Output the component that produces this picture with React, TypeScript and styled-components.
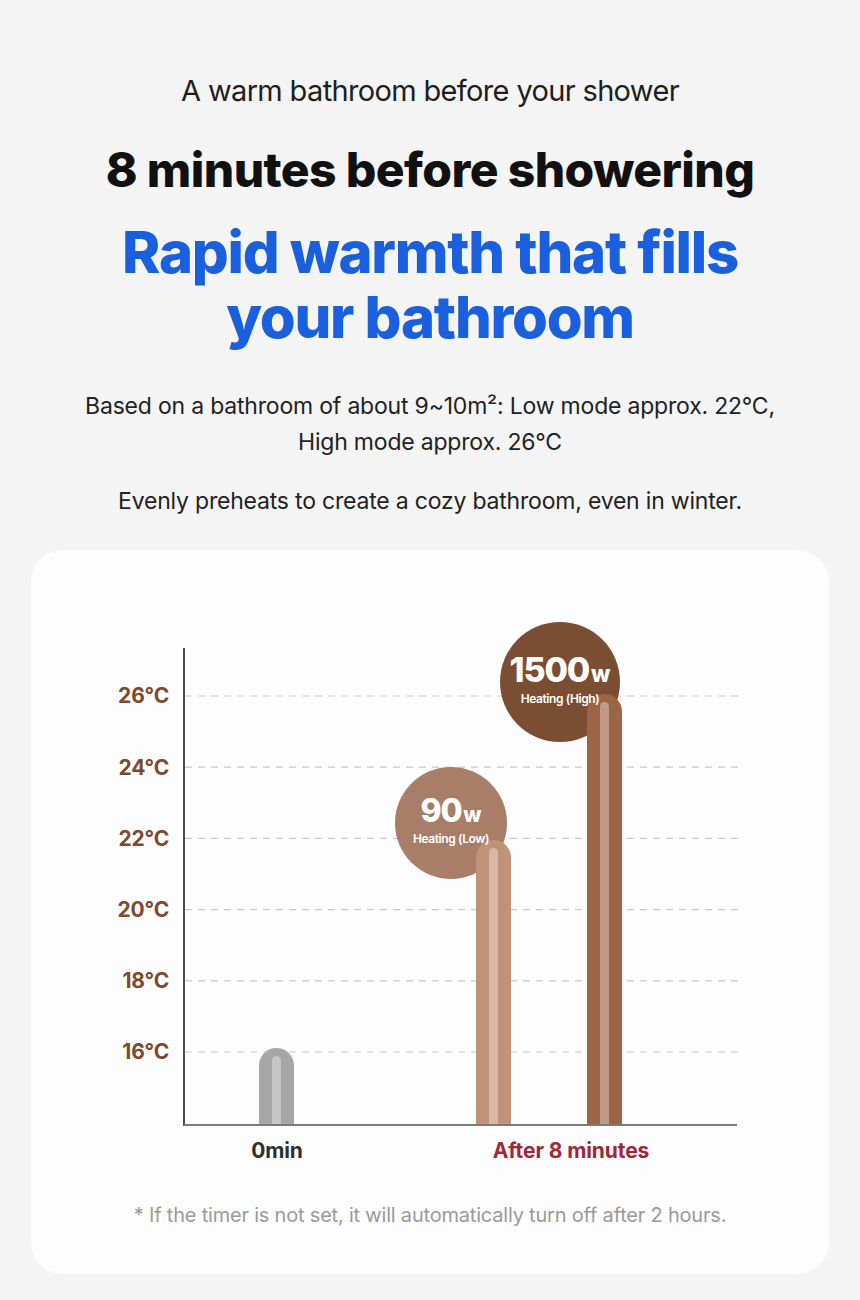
import React from "react";
import styled, { createGlobalStyle } from "styled-components";

const Global = createGlobalStyle`
  html, body { margin: 0; padding: 0; background: #f4f4f4; }
  body { font-family: Inter, "Noto Sans", "Liberation Sans", sans-serif; -webkit-font-smoothing: antialiased; }
  * { box-sizing: border-box; }
`;

const Page = styled.div`
  width: 860px;
  min-height: 1300px;
  padding: 70px 31px 26px;
  display: flex;
  flex-direction: column;
  align-items: center;
  background: #f4f4f4;
`;

const Eyebrow = styled.p`
  margin: 0;
  font-size: 29px;
  font-weight: 400;
  letter-spacing: -0.65px;
  color: #1e1e1e;
  line-height: 42px;
  white-space: nowrap;
`;

const Headline = styled.h1`
  margin: 30px 0 0;
  font-size: 48px;
  font-weight: 800;
  letter-spacing: -0.6px;
  color: #111;
  line-height: 56px;
  white-space: nowrap;
`;

const Accent = styled.h2`
  margin: 22px 0 0;
  font-size: 58px;
  font-weight: 800;
  letter-spacing: -1.25px;
  color: #1a5fdd;
  line-height: 65px;
  text-align: center;
  white-space: nowrap;
`;

const Body = styled.p<{ $gap: number }>`
  margin: ${(p) => p.$gap}px 0 0;
  font-size: 23px;
  font-weight: 400;
  letter-spacing: -0.2px;
  color: #222;
  line-height: 36px;
  text-align: center;
  white-space: nowrap;
`;

const Card = styled.section`
  margin-top: 31px;
  width: 798px;
  height: 724px;
  background: #fdfdfd;
  border-radius: 32px;
  padding: 98px 0 0;
  display: flex;
  flex-direction: column;
`;

const ChartGrid = styled.div`
  display: grid;
  grid-template-columns: 152px 554px;
`;

const YLabels = styled.div`
  display: flex;
  flex-direction: column;
  padding-top: 12.4px;
  padding-right: 14px;
`;

const YLabel = styled.div`
  height: 71.2px;
  display: flex;
  align-items: center;
  justify-content: flex-end;
  font-size: 21px;
  font-weight: 700;
  letter-spacing: -0.2px;
  color: #7b4a2f;
`;

const Plot = styled.div`
  position: relative;
  height: 478px;
  border-left: 2px solid #4d4d4d;
  border-bottom: 2px solid #7a7a7a;
`;

const GridSvg = styled.svg`
  position: absolute;
  left: 0;
  top: 0;
`;

/* no z-index: the disc sits under the bars, its label can rise above them */
const Bubble = styled.div<{ $size: number; $bg: string }>`
  position: absolute;
  width: ${(p) => p.$size}px;
  height: ${(p) => p.$size}px;
  border-radius: 50%;
  background: ${(p) => p.$bg};
  color: #fff;
  display: flex;
  flex-direction: column;
  align-items: center;
  justify-content: center;
  padding-bottom: 6px;
`;

const Watt = styled.div<{ $size: number }>`
  font-size: ${(p) => p.$size}px;
  font-weight: 800;
  letter-spacing: -1.2px;
  line-height: 1;
  display: flex;
  align-items: baseline;
`;

const Unit = styled.span`
  font-size: 0.66em;
  font-weight: 800;
  letter-spacing: 0;
  margin-left: 2px;
`;

const Mode = styled.div`
  position: relative;
  z-index: 3;
  margin-top: 6px;
  font-size: 12px;
  font-weight: 600;
  letter-spacing: -0.4px;
  line-height: 1;
`;

const Bar = styled.div<{ $base: string; $shine: string }>`
  position: absolute;
  z-index: 2;
  bottom: 0;
  width: 35px;
  border-radius: 17.5px 17.5px 0 0;
  background: ${(p) => p.$base};
  &::after {
    content: "";
    position: absolute;
    left: 13px;
    top: 8px;
    bottom: 0;
    width: 9px;
    border-radius: 4.5px 4.5px 0 0;
    background: ${(p) => p.$shine};
  }
`;

const XLabels = styled.div`
  display: grid;
  grid-template-columns: 188px 400px;
  margin-left: 152px;
  margin-top: 13px;
`;

const XLabel = styled.div<{ $color: string }>`
  text-align: center;
  font-size: 21px;
  font-weight: 700;
  letter-spacing: -0.1px;
  color: ${(p) => p.$color};
  line-height: 24px;
`;

const Note = styled.p`
  margin: 40px 0 0;
  text-align: center;
  font-size: 20px;
  font-weight: 400;
  letter-spacing: -0.2px;
  color: #9a9a9a;
  white-space: nowrap;
`;

const PLOT_H = 478;
const gridYs = [48, 119.2, 190.4, 261.6, 332.8, 404];
const labels = ["26°C", "24°C", "22°C", "20°C", "18°C", "16°C"];

const bars = [
  { left: 76, top: 402, base: "#a6a6a6", shine: "#c6c6c6" },
  { left: 293, top: 194, base: "#c09378", shine: "#d8b8a5" },
  { left: 404, top: 48, base: "#9b6546", shine: "#bf9a84" },
];

export default function App() {
  return (
    <>
      <Global />
      <Page>
        <Eyebrow>A warm bathroom before your shower</Eyebrow>
        <Headline>8 minutes before showering</Headline>
        <Accent>
          Rapid warmth that fills
          <br />
          your bathroom
        </Accent>
        <Body $gap={38}>
          Based on a bathroom of about 9~10m²: Low mode approx. 22°C,
          <br />
          High mode approx. 26°C
        </Body>
        <Body $gap={23}>Evenly preheats to create a cozy bathroom, even in winter.</Body>
        <Card>
          <ChartGrid>
            <YLabels>
              {labels.map((l) => (
                <YLabel key={l}>{l}</YLabel>
              ))}
            </YLabels>
            <Plot>
              <GridSvg width="554" height={PLOT_H}>
                {gridYs.map((y) => (
                  <line
                    key={y}
                    x1="0"
                    x2="554"
                    y1={y}
                    y2={y}
                    stroke="#c9c9c9"
                    strokeWidth="1.2"
                    strokeDasharray="7 6"
                  />
                ))}
              </GridSvg>
              <Bubble $size={112} $bg="#a87e69" style={{ left: 210, top: 119 }}>
                <Watt $size={32}>
                  90<Unit>w</Unit>
                </Watt>
                <Mode>Heating (Low)</Mode>
              </Bubble>
              <Bubble $size={120} $bg="#7b4d33" style={{ left: 315, top: -26 }}>
                <Watt $size={34}>
                  1500<Unit>w</Unit>
                </Watt>
                <Mode>Heating (High)</Mode>
              </Bubble>
              {bars.map((b) => (
                <Bar
                  key={b.left}
                  $base={b.base}
                  $shine={b.shine}
                  style={{ left: b.left - 2, height: PLOT_H - b.top }}
                />
              ))}
            </Plot>
          </ChartGrid>
          <XLabels>
            <XLabel $color="#2e2e2e">0min</XLabel>
            <XLabel $color="#a0263a">After 8 minutes</XLabel>
          </XLabels>
          <Note>* If the timer is not set, it will automatically turn off after 2 hours.</Note>
        </Card>
      </Page>
    </>
  );
}
